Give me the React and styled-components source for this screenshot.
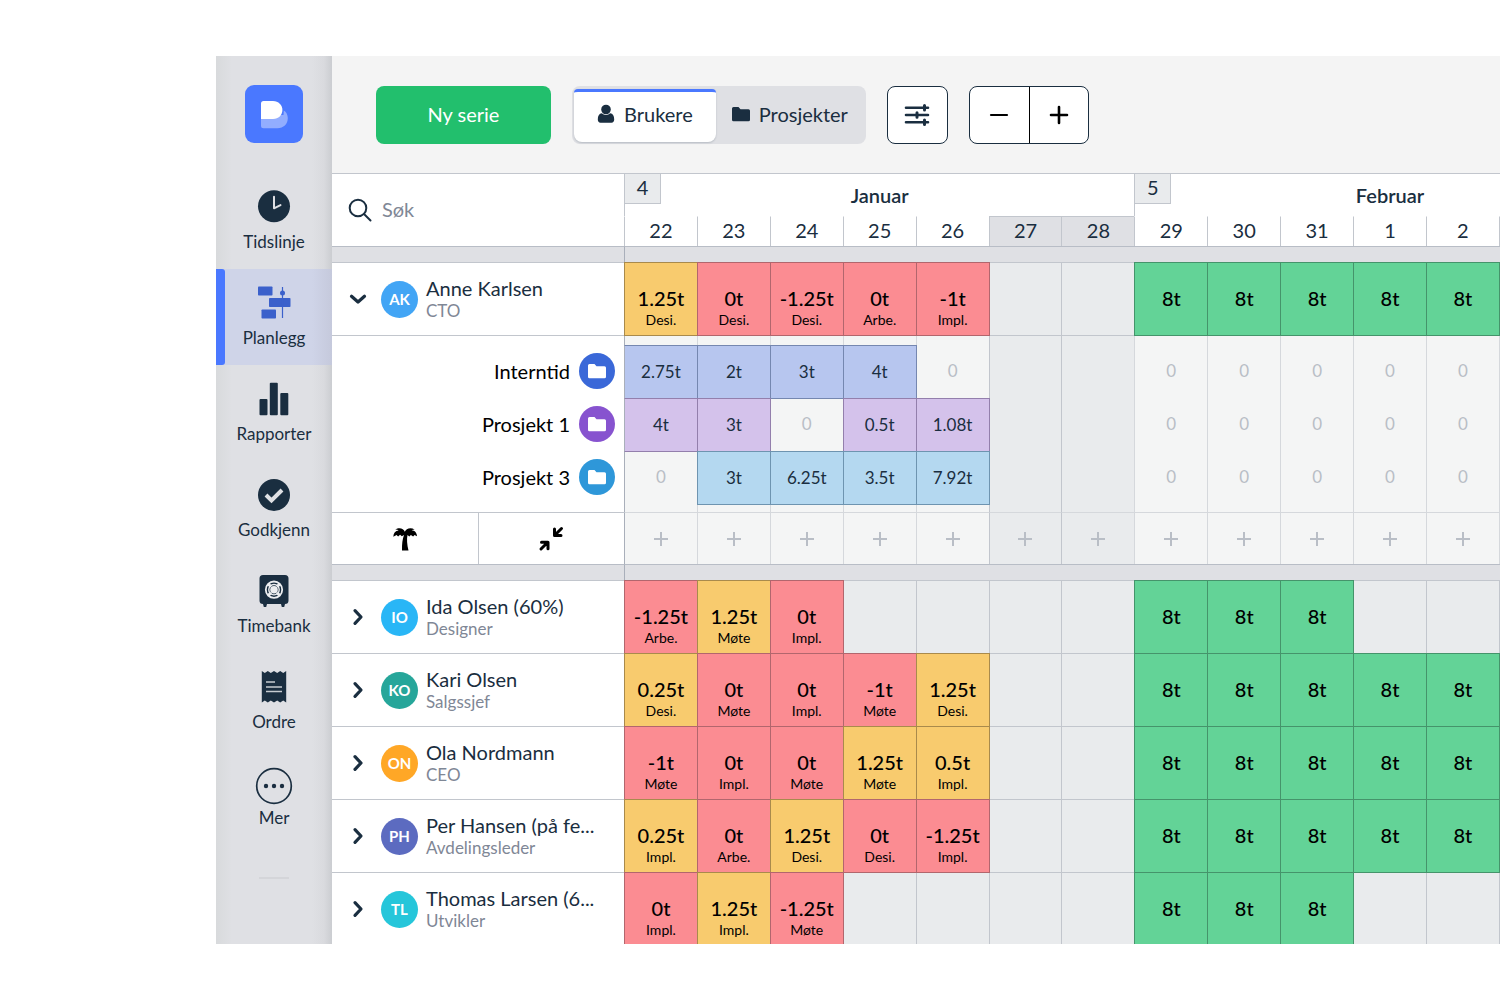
import React from "react";
import styled, { createGlobalStyle } from "styled-components";

const DAYS = [22, 23, 24, 25, 26, 27, 28, 29, 30, 31, 1, 2];
const WEEKEND = [5, 6];

const NAV = [
  { name: "Tidslinje", icon: "clock" },
  { name: "Planlegg", icon: "plan", active: true },
  { name: "Rapporter", icon: "bars" },
  { name: "Godkjenn", icon: "check" },
  { name: "Timebank", icon: "safe" },
  { name: "Ordre", icon: "receipt" },
  { name: "Mer", icon: "more" }
];

const full = ["g 8t", "g 8t", "g 8t", "g 8t", "g 8t"];
const part = ["g 8t", "g 8t", "g 8t", "", ""];

const ANNE = {
  name: "Anne Karlsen",
  role: "CTO",
  initials: "AK",
  color: "#42a5f5",
  cells: ["o 1.25t Desi.", "r 0t Desi.", "r -1.25t Desi.", "r 0t Arbe.", "r -1t Impl.", "", "", ...full]
};

const PEOPLE = [
  {
    name: "Ida Olsen (60%)",
    role: "Designer",
    initials: "IO",
    color: "#29b6f6",
    cells: ["r -1.25t Arbe.", "o 1.25t Møte", "r 0t Impl.", "", "", "", "", ...part]
  },
  {
    name: "Kari Olsen",
    role: "Salgssjef",
    initials: "KO",
    color: "#26a69a",
    cells: ["o 0.25t Desi.", "r 0t Møte", "r 0t Impl.", "r -1t Møte", "o 1.25t Desi.", "", "", ...full]
  },
  {
    name: "Ola Nordmann",
    role: "CEO",
    initials: "ON",
    color: "#ffa726",
    cells: ["r -1t Møte", "r 0t Impl.", "r 0t Møte", "o 1.25t Møte", "o 0.5t Impl.", "", "", ...full]
  },
  {
    name: "Per Hansen (på fe...",
    role: "Avdelingsleder",
    initials: "PH",
    color: "#5c6bc0",
    cells: ["o 0.25t Impl.", "r 0t Arbe.", "o 1.25t Desi.", "r 0t Desi.", "r -1.25t Impl.", "", "", ...full]
  },
  {
    name: "Thomas Larsen (6...",
    role: "Utvikler",
    initials: "TL",
    color: "#26c6da",
    cells: ["r 0t Impl.", "o 1.25t Impl.", "r -1.25t Møte", "", "", "", "", ...part]
  }
];

const PROJECTS = [
  { name: "Interntid", color: "#3a68d8", tone: "blue", hours: ["2.75t", "2t", "3t", "4t", "0"] },
  { name: "Prosjekt 1", color: "#8753cf", tone: "purple", hours: ["4t", "3t", "0", "0.5t", "1.08t"] },
  { name: "Prosjekt 3", color: "#2e97d9", tone: "sky", hours: ["0", "3t", "6.25t", "3.5t", "7.92t"] }
];

const TONES = {
  r: ["#fb8c92", "#b2666d"],
  o: ["#f8cb6e", "#a98a4c"],
  g: ["#63d397", "#45946b"],
  blue: ["#b7c6ef", "#7587b0"],
  purple: ["#d4c2eb", "#937fac"],
  sky: ["#b4d8f0", "#6e94b0"]
};

function NavIcon({ name }) {
  return (
    <svg width="32" height="32" viewBox="0 0 32 32" fill="currentColor" overflow="visible" aria-hidden="true">
      {name === "clock" && (
        <>
          <circle cx="16" cy="16.300" r="16" />
          <path d="M16 6.800V18.300l6.500-3.200" fill="none" stroke="#dfe0e4" strokeWidth="2" strokeLinecap="round" strokeLinejoin="round" />
        </>
      )}
      {name === "plan" && (
        <>
          <rect x="0" y="0.500" width="14.500" height="9" rx="0.800" />
          <rect x="11" y="12" width="21.500" height="9" rx="0.800" />
          <rect x="3.500" y="23.500" width="14.500" height="9" rx="0.800" />
          <path d="M24.500 1v31" stroke="currentColor" strokeWidth="1.200" />
          <circle cx="24.500" cy="7" r="2.500" />
        </>
      )}
      {name === "bars" && (
        <>
          <rect x="1.500" y="17" width="8" height="16.300" rx="1" />
          <rect x="11.800" y="0.800" width="8" height="32.500" rx="1" />
          <rect x="22.300" y="11" width="8" height="22.300" rx="1" />
        </>
      )}
      {name === "check" && (
        <>
          <circle cx="16" cy="17" r="16" />
          <path d="M8 17l5.500 5.500L24 12" fill="none" stroke="#dfe0e4" strokeWidth="4" />
        </>
      )}
      {name === "safe" && (
        <>
          <path d="M5 1h22a3.500 3.500 0 013.500 3.500v22A3.500 3.500 0 0127 30l-.8 3h-2.400L23 30H9l-.8 3H5.800L5 30a3.500 3.500 0 01-3.500-3.500v-22A3.500 3.500 0 015 1z" />
          <circle cx="16" cy="15.700" r="8.200" fill="none" stroke="#eceef0" strokeWidth="1.800" />
          <circle cx="16" cy="15.700" r="5.200" fill="none" stroke="#eceef0" strokeWidth="1.400" />
          <path d="M10.200 9.900l2.800 2.800M21.800 9.900L19 12.700M10.200 21.500l2.800-2.800M21.800 21.500L19 18.700" stroke="#eceef0" strokeWidth="3" />
          <circle cx="16" cy="15.700" r="3.800" fill="#eceef0" />
        </>
      )}
      {name === "receipt" && (
        <>
          <path d="M3.800 1l3 2 3-2 3 2 3.200-2 3.200 2 3-2 3 2 3-2v31.500l-3-2-3 2-3-2-3.200 2-3.200-2-3 2-3-2-3 2z" />
          <path d="M8 12h9M8 17h16M8 21.500h16" stroke="#c6cbd0" strokeWidth="1.400" />
        </>
      )}
      {name === "more" && (
        <>
          <circle cx="16" cy="20" r="17.300" fill="none" stroke="currentColor" strokeWidth="1.700" />
          <circle cx="8" cy="20" r="2.200" />
          <circle cx="16" cy="20" r="2.200" />
          <circle cx="24" cy="20" r="2.200" />
        </>
      )}
    </svg>
  );
}

function Folder({ size }) {
  return (
    <svg width={size} height={size} viewBox="0 0 18 18" fill="currentColor" aria-hidden="true">
      <path d="M1.500 2h5l2 2.200h8A1.500 1.500 0 0118 5.700v9a1.500 1.500 0 01-1.500 1.500h-15A1.500 1.500 0 010 14.700V3.500A1.500 1.500 0 011.500 2z" />
    </svg>
  );
}

function Chevron({ open }) {
  return (
    <svg width="18" height="18" viewBox="0 0 18 18" fill="none" stroke="currentColor" strokeWidth="3.200" strokeLinecap="round" strokeLinejoin="round" aria-hidden="true">
      <path d={open ? "M2.500 6.200L9 12l6.500-5.800" : "M6 2.700L12 9l-6 6.300"} />
    </svg>
  );
}

function PersonRow({ person, open }) {
  return (
    <Row>
      <PersonHead scope="row">
        <Person>
          <Toggle type="button" aria-expanded={!!open} aria-label={person.name}>
            <Chevron open={open} />
          </Toggle>
          <Avatar $color={person.color}>{person.initials}</Avatar>
          <div>
            <Name>{person.name}</Name>
            <Role>{person.role}</Role>
          </div>
        </Person>
      </PersonHead>
      {DAYS.map((day, i) => {
        const [tone, hours, task] = (person.cells[i] || "").split(" ");
        return (
          <DayCell key={day} $tone={tone}>
            {hours && <Hours>{hours}</Hours>}
            {task && <Task>{task}</Task>}
          </DayCell>
        );
      })}
    </Row>
  );
}

function Gap({ height }) {
  return (
    <Row>
      <ProjectHead as="td" $height={height} />
      {DAYS.map((day, i) => (
        <SubCell key={day} $height={height} $weekend={WEEKEND.includes(i)} />
      ))}
    </Row>
  );
}

function Band() {
  return (
    <Row aria-hidden="true">
      <BandCell />
      <BandCell $wide />
    </Row>
  );
}

export default function App() {
  return (
    <Page>
      <GlobalStyle />
      <Sidebar>
        <Logo href="#" aria-label="Hjem">
          <svg width="58" height="58" viewBox="0 0 58 58" aria-hidden="true">
            <path d="M16 30h22.500l.3-4.500c2.400 1.400 4 4.200 4 7.500 0 6-4.300 10.300-10.300 10.300H18.500a2.500 2.500 0 01-2.500-2.500z" fill="#92adff" />
            <path d="M18.500 16H28c5.500 0 9.400 4 9.400 9s-3.900 9-9.400 9H16V18.500a2.500 2.500 0 012.500-2.500z" fill="#fff" />
          </svg>
        </Logo>
        <nav>
          {NAV.map(item => (
            <NavItem key={item.name} href="#" $active={item.active}>
              <NavIcon name={item.icon} />
              <span>{item.name}</span>
            </NavItem>
          ))}
        </nav>
        <Divider />
      </Sidebar>
      <Main>
        <Toolbar>
          <NewButton type="button">Ny serie</NewButton>
          <Segment>
            <Tab type="button" $active>
              <svg width="18" height="20" viewBox="0 0 18 20" fill="currentColor" aria-hidden="true">
                <circle cx="9" cy="5.500" r="4.800" />
                <path d="M4.800 9.300C2 9.600.8 12 .8 15.500c0 2 1 3.200 2.700 3.200h11c1.700 0 2.700-1.200 2.700-3.200 0-3.500-1.200-5.900-4-6.200A5.900 5.900 0 019 11a5.900 5.900 0 01-4.200-1.700z" />
              </svg>
              Brukere
            </Tab>
            <Tab type="button">
              <Folder size={18} />
              Prosjekter
            </Tab>
          </Segment>
          <FilterButton type="button" aria-label="Filter">
            <svg width="26" height="24" viewBox="0 0 26 24" fill="none" stroke="currentColor" strokeWidth="2.600" strokeLinecap="round" aria-hidden="true">
              <path d="M2 4.700h22M2 12h22M2 19.300h22" />
              <path d="M20.500 2.400v4.600M13 9.700v4.600M20.500 17v4.600" strokeWidth="3" />
            </svg>
          </FilterButton>
          <ZoomGroup>
            <ZoomButton type="button" aria-label="Zoom ut">
              <svg width="20" height="20" viewBox="0 0 20 20" aria-hidden="true">
                <path d="M2 10h16" stroke="currentColor" strokeWidth="2.200" strokeLinecap="round" />
              </svg>
            </ZoomButton>
            <ZoomButton type="button" aria-label="Zoom inn">
              <svg width="20" height="20" viewBox="0 0 20 20" aria-hidden="true">
                <path d="M2 10h16M10 2v16" stroke="currentColor" strokeWidth="2.600" strokeLinecap="round" />
              </svg>
            </ZoomButton>
          </ZoomGroup>
        </Toolbar>
        <Schedule>
          <Head>
            <tr>
              <SearchCell>
                <Search>
                  <svg width="24" height="24" viewBox="0 0 24 24" fill="none" stroke="currentColor" strokeWidth="2" strokeLinecap="round" aria-hidden="true">
                    <circle cx="10" cy="10" r="8.300" />
                    <path d="M16 16l6.500 6.500" />
                  </svg>
                  <input type="search" placeholder="Søk" aria-label="Søk" />
                </Search>
              </SearchCell>
              <Month colSpan={7}>
                <MonthInner>
                  <Week>4</Week>
                  <span>Januar</span>
                </MonthInner>
              </Month>
              <Month colSpan={7}>
                <MonthInner>
                  <Week>5</Week>
                  <span>Februar</span>
                </MonthInner>
              </Month>
            </tr>
            <tr>
              {DAYS.map((day, i) => (
                <DayHead key={day} scope="col" $weekend={WEEKEND.includes(i)}>
                  {day}
                </DayHead>
              ))}
            </tr>
          </Head>
          <tbody>
            <Band />
            <PersonRow person={ANNE} open />
            <Gap height={10} />
            {PROJECTS.map(project => (
              <Row key={project.name}>
                <ProjectHead scope="row" $height={53}>
                  {project.name}
                  <ProjectIcon $color={project.color}>
                    <Folder size={18} />
                  </ProjectIcon>
                </ProjectHead>
                {DAYS.map((day, i) => {
                  const weekend = WEEKEND.includes(i);
                  const hours = weekend ? "" : project.hours[i] || "0";
                  const filled = hours && hours !== "0";
                  return (
                    <SubCell key={day} $height={53} $weekend={weekend} $tone={filled ? project.tone : ""}>
                      {hours}
                    </SubCell>
                  );
                })}
              </Row>
            ))}
            <Gap height={8} />
            <Row>
              <ActionCell>
                <Action type="button" aria-label="Ferie">
                  <svg width="26" height="26" viewBox="0 0 26 26" aria-hidden="true">
                    <path
                      d="M12.800 5.800C13.800 2.600 18.500.8 22.600 3.400c-1.300 0-2.300.3-3 .9 3.200.3 5.300 2.500 5.400 6l-2.400-1.400-1.500 1.600-2.200-1.600-1.600 1.500-1.800-1.500c-.9 4.200-.5 9.500 1 15.600H10c-.1-6.400.5-11.400 2-15.400l-2.200 1.200-1.700-1.500-2 1.700-1.500-1.400L1.300 10.800C1.400 7 3.500 4.900 6.600 4.500 5.800 3.800 4.800 3.500 3.200 3.600 7.300.9 11.600 2.500 12.800 5.800z"
                      fill="currentColor"
                    />
                  </svg>
                </Action>
                <Action type="button" aria-label="Skjul">
                  <svg width="26" height="26" viewBox="0 0 26 26" fill="none" stroke="currentColor" strokeWidth="3" strokeLinecap="round" strokeLinejoin="round" aria-hidden="true">
                    <path d="M23.500 2.500l-6 6M16.500 3v6.500H23" />
                    <path d="M3 23l6-6M3.500 16.200H10v6.500" />
                  </svg>
                </Action>
              </ActionCell>
              {DAYS.map((day, i) => (
                <AddCell key={day} $height={52} $weekend={WEEKEND.includes(i)}>
                  <Action type="button" aria-label={`Legg til ${day}`}>
                    <svg width="16" height="16" viewBox="0 0 16 16" aria-hidden="true">
                      <path d="M1 8h14M8 1v14" stroke="currentColor" strokeWidth="2" />
                    </svg>
                  </Action>
                </AddCell>
              ))}
            </Row>
            <Band />
            {PEOPLE.map(person => (
              <PersonRow key={person.name} person={person} />
            ))}
          </tbody>
        </Schedule>
      </Main>
    </Page>
  );
}

// Styled Components
const GlobalStyle = createGlobalStyle`
  * {
    box-sizing: border-box;
  }
  body {
    margin: 0;
    background: #fff;
    color: #1a2e40;
    font-family: Lato, "Liberation Sans", sans-serif;
    font-size: 20px;
  }
  button, input {
    font: inherit;
    color: inherit;
  }
  button {
    display: flex;
    align-items: center;
    justify-content: center;
    padding: 0;
    border: 0;
    background: none;
    cursor: pointer;
  }
`;

const Page = styled.div`
  display: flex;
  height: 100vh;
  padding: 56px 0 56px 216px;
  overflow: hidden;
`;

const Sidebar = styled.aside`
  flex: 0 0 116px;
  display: flex;
  flex-direction: column;
  background: #dfe0e4;
  background: linear-gradient(
    90deg,
    #d8dadc,
    #dfe0e4 16px,
    #dfe0e4 calc(100% - 20px),
    #d9dade calc(100% - 8px),
    #cbcdd1
  );
`;

const Logo = styled.a`
  align-self: center;
  height: 58px;
  margin: 29px 0 30px;
  border-radius: 9px;
  background: #4a78ff;
`;

const NavItem = styled.a`
  position: relative;
  display: flex;
  flex-direction: column;
  align-items: center;
  gap: 8px;
  height: 96px;
  padding-top: 17px;
  color: #1a2e40;
  font-size: 17px;
  line-height: 24px;
  text-decoration: none;

  ${p =>
    p.$active &&
    `
    background: linear-gradient(90deg, #cfd4e8 calc(100% - 20px), #c5c9dc);

    &::before {
      content: "";
      position: absolute;
      top: 0;
      bottom: 0;
      left: 0;
      width: 9px;
      border-radius: 0 3px 3px 0;
      background: #4a78ff;
    }

    svg {
      color: #3b60cb;
    }
  `}
`;

const Divider = styled.hr`
  width: 30px;
  height: 2px;
  margin: 32px auto 0;
  border: 0;
  background: #d4d5d9;
`;

const Main = styled.main`
  flex: 1;
  min-width: 0;
  overflow: hidden;
  background: #f4f4f4;
`;

const Toolbar = styled.div`
  display: flex;
  align-items: center;
  gap: 21px;
  height: 117px;
  padding: 0 44px;
`;

const NewButton = styled.button`
  width: 175px;
  height: 58px;
  padding-bottom: 2px;
  border-radius: 8px;
  background: #22bf6d;
  color: #fff;
`;

const Segment = styled.div`
  display: flex;
  height: 58px;
  padding: 3px 2px 2px;
  border-radius: 8px;
  background: #dfe0e4;
`;

const Tab = styled.button`
  gap: 9px;
  padding: 0 16px 2px;

  ${p =>
    p.$active &&
    `
    padding: 0 23px 5px;
    border-top: 3px solid #4a78ff;
    border-radius: 4px 4px 8px 8px;
    background: #fff;
    box-shadow: 0 1px 2px rgba(26, 46, 64, 0.2);
  `}
`;

const FilterButton = styled.button`
  width: 61px;
  height: 58px;
  border: 1px solid #1a2e40;
  border-radius: 8px;
  background: #fff;
`;

const ZoomGroup = styled.div`
  display: flex;
  height: 58px;
  border: 1px solid #1a2e40;
  border-radius: 8px;
  background: #fff;
`;

const ZoomButton = styled.button`
  width: 59px;
  color: #000;

  & + & {
    border-left: 1px solid #000;
  }
`;

// twelve days fill the visible width, the rest of the last week runs off the edge
const columns = "292px repeat(14, calc((100% - 293px) / 12))";

const Schedule = styled.table`
  display: block;

  tbody {
    display: block;
  }
  td,
  th {
    padding: 0;
    font-weight: 400;
  }
`;

const Head = styled.thead`
  display: grid;
  grid-template-columns: ${columns};
  grid-template-rows: 43px 30px;
  background: #fff;

  tr {
    display: contents;
  }
`;

const SearchCell = styled.td`
  grid-row: 1 / 3;
  display: flex;
  align-items: center;
  border-top: 1px solid #c2c6cd;
`;

const Search = styled.label`
  display: flex;
  align-items: center;
  gap: 10px;
  padding: 0 16px;

  input {
    width: 200px;
    padding: 0 0 3px;
    border: 0;
    outline: 0;
    background: none;
  }
  input::placeholder {
    color: #7f8796;
  }
`;

const Month = styled.th`
  grid-column: span 7;
  border-top: 1px solid #c2c6cd;
  border-left: 1px solid #c2c6cd;
`;

const MonthInner = styled.div`
  display: grid;
  grid-template-columns: 36px 1fr 36px;
  align-items: center;
  height: 42px;
  font-weight: 600;
`;

const Week = styled.span`
  align-self: start;
  height: 30px;
  border-right: 1px solid #c2c6cd;
  border-bottom: 1px solid #c2c6cd;
  background: #e9ebed;
  font-weight: 400;
  line-height: 26px;
`;

const DayHead = styled.th`
  border-left: 1px solid #c2c6cd;
  border-top: 1px solid ${p => (p.$weekend ? "#c2c6cd" : "transparent")};
  background: ${p => (p.$weekend ? "#dfe0e4" : "#fff")};
  line-height: 26px;

  &:last-child {
    margin-right: -1px;
    border-right: 1px solid #c2c6cd;
  }
`;

const Row = styled.tr`
  display: grid;
  grid-template-columns: ${columns};
`;

const BandCell = styled.td`
  grid-column: ${p => (p.$wide ? "span 14" : "auto")};
  height: 16px;
  border-top: 1px solid #b8bdc6;
  border-left: ${p => (p.$wide ? "1px solid #a9afba" : "0")};
  background: #dfe0e4;
`;

const PersonHead = styled.th`
  z-index: 1;
  border: solid #c2c6cd;
  border-width: 1px 0;
  margin-bottom: -1px;
  background: #fff;
  text-align: left;
`;

const Person = styled.div`
  display: flex;
  align-items: center;
  height: 72px;
  padding-left: 17px;
`;

const Toggle = styled.button`
  width: 18px;
  height: 18px;
`;

const Avatar = styled.span`
  flex: none;
  width: 37px;
  margin: 0 8px 0 14px;
  border-radius: 50%;
  background: ${p => p.$color};
  color: #fff;
  font-size: 15px;
  font-weight: 700;
  line-height: 37px;
  text-align: center;
`;

const Name = styled.div`
  line-height: 24px;
  white-space: nowrap;
`;

const Role = styled.div`
  color: #7f8796;
  font-size: 17px;
  line-height: 22px;
`;

const DayCell = styled.td`
  display: grid;
  grid-template-rows: 23px 24px 1fr;
  z-index: ${p => (p.$tone ? 2 : 1)};
  height: 74px;
  margin: 0 -1px -1px 0;
  border: 1px solid ${p => (p.$tone ? TONES[p.$tone][1] : "#c2c6cd")};
  background: ${p => (p.$tone ? TONES[p.$tone][0] : "#e9ebed")};
  color: #000;
  text-align: center;
`;

const Hours = styled.span`
  grid-row: 2;
  line-height: 24px;
  font-weight: 500;
`;

const Task = styled.span`
  grid-row: 3;
  font-size: 14px;
  line-height: 20px;
`;

const ProjectHead = styled.th`
  display: flex;
  align-items: center;
  justify-content: flex-end;
  gap: 9px;
  height: ${p => p.$height}px;
  background: #fff;
  color: #000;

  && {
    padding: 0 9px 2px 0;
  }
`;

const ProjectIcon = styled.span`
  display: flex;
  align-items: center;
  justify-content: center;
  width: 36px;
  height: 36px;
  border-radius: 50%;
  background: ${p => p.$color};
  color: #fff;
`;

const SubCell = styled.td`
  height: ${p => p.$height}px;
  border-left: 1px solid ${p => (p.$weekend ? "#c2c6cd" : "#d5d8dc")};
  background: ${p => (p.$weekend ? "#e9ebed" : "#f4f5f5")};
  color: #b9bec6;
  font-size: 17px;
  line-height: ${p => p.$height - 2}px;
  text-align: center;

  &:nth-child(2) {
    border-left-color: #a9afba;
  }
  &:last-child {
    margin-right: -1px;
    border-right: 1px solid #d5d8dc;
  }

  ${p =>
    p.$tone &&
    `
    z-index: 1;
    height: ${p.$height + 1}px;
    margin: 0 -1px -1px 0;
    border: 1px solid ${TONES[p.$tone][1]};
    background: ${TONES[p.$tone][0]};
    color: #1a2e40;
  `}
`;

const Action = styled.button`
  width: 100%;
  height: 100%;
`;

const ActionCell = styled.td`
  display: flex;
  height: 52px;
  border-top: 1px solid #c2c6cd;
  background: #fff;
  color: #000;

  ${Action} + ${Action} {
    border-left: 1px solid #c2c6cd;
  }
`;

const AddCell = styled(SubCell)`
  border-top: 1px solid #d5d8dc;
`;
